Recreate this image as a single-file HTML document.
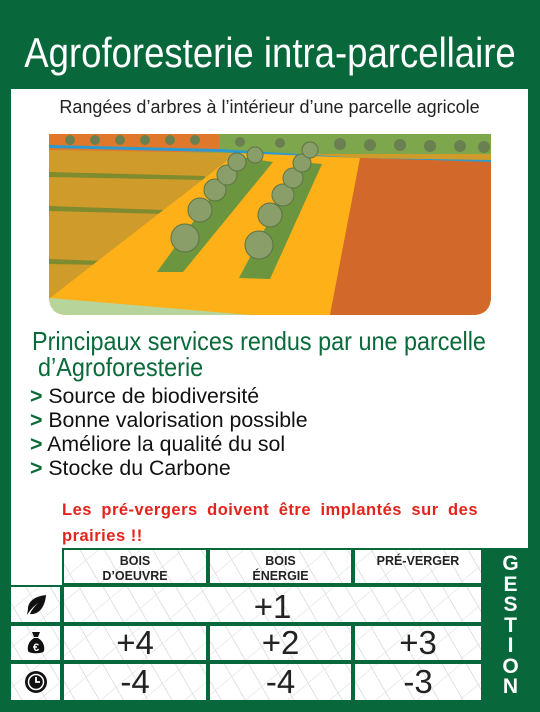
<!DOCTYPE html><html><head><meta charset="utf-8"><style>
*{margin:0;padding:0;box-sizing:border-box}
body{width:540px;height:712px;background:#09683b;position:relative;overflow:hidden;font-family:"Liberation Sans",sans-serif}
.a{position:absolute}
#title{left:270px;top:30px;white-space:nowrap;color:#fff;font-size:42px;line-height:46px;transform:translateX(-50%) scaleX(0.87);transform-origin:center}
#panel{left:11px;top:89px;width:517px;height:459px;background:#fff}
#sub{left:11px;top:97px;width:517px;text-align:center;font-size:18px;color:#222;white-space:nowrap}
.h2{color:#0b6a3a;font-size:26px;line-height:26px;white-space:nowrap;transform:scaleX(0.9);transform-origin:left}
.li{left:30px;font-size:21.3px;color:#111;line-height:24.5px;white-space:nowrap}
.li b{color:#0b6a3a}
#warn1{left:62px;top:497px;width:416px;color:#e3231c;font-weight:bold;font-size:16.5px;letter-spacing:0.5px;line-height:26px;text-align:justify;text-align-last:justify;white-space:nowrap}
#warn2{left:62px;top:523px;color:#e3231c;font-weight:bold;font-size:16.5px;letter-spacing:0.5px;line-height:26px}
.c{position:absolute;background:#fff;background-image:repeating-linear-gradient(60deg,transparent 0 9px,#e2e2e2 9px 10px,transparent 10px 21px),repeating-linear-gradient(-40deg,transparent 0 13px,#ececec 13px 14px,transparent 14px 27px);display:flex;align-items:center;justify-content:center;color:#222;font-size:33px}
.hd{font-size:12.5px;font-weight:bold;text-align:center;line-height:15px;align-items:flex-start;padding-top:4px}
#g{left:481px;top:554px;width:59px;text-align:center;color:#fff;font-weight:bold;font-size:21px;line-height:20.5px}
</style></head><body>
<div class="a" id="title">Agroforesterie intra-parcellaire</div>
<div class="a" id="panel"></div>
<div class="a" id="sub">Rangées d’arbres à l’intérieur d’une parcelle agricole</div>
<svg class="a" style="left:49px;top:134px" width="442" height="182" viewBox="49 134 442 182">
<defs><clipPath id="cp"><path d="M49 134H491V296Q491 315 472 315H68Q49 315 49 296Z"/></clipPath></defs>
<g clip-path="url(#cp)">
<rect x="49" y="134" width="442" height="181" fill="#cf9b2b"/>
<rect x="49" y="134" width="442" height="20" fill="#7ea64c"/>
<rect x="49" y="134" width="170" height="18" fill="#e0782c"/>
<path d="M49 145L220 149L360 158L491 160V162L360 161L220 152L49 148Z" fill="#2a9ad0"/>
<path d="M49 150L237 153L360 158L491 162V315H49Z" fill="#cf9b2b"/>
<path d="M49 172L205 176L205 180L49 177ZM49 206L165 210L165 214L49 211ZM49 259L105 261L105 265L49 264Z" fill="#7e8b2f"/>
<path d="M237 153L360 158L330 315L52 315L50 298Z" fill="#fdb017"/>
<path d="M49 298L50 298L250 315H49Z" fill="#b7d49b"/>
<path d="M360 158L491 162V315H330Z" fill="#d2682a"/>
<path d="M240 157L273 162L183 272L157 272Z" fill="#6b953f"/>
<path d="M300 162L322 164L270 279L239 278Z" fill="#6b953f"/>
<g fill="#8a9e6a" stroke="#5d7447" stroke-width="1">
<circle cx="185" cy="238" r="14"/><circle cx="200" cy="210" r="12"/><circle cx="215" cy="190" r="11"/><circle cx="227" cy="175" r="10"/><circle cx="237" cy="162" r="9"/><circle cx="255" cy="155" r="8"/>
<circle cx="259" cy="245" r="14"/><circle cx="270" cy="215" r="12"/><circle cx="283" cy="195" r="11"/><circle cx="293" cy="178" r="10"/><circle cx="302" cy="163" r="9"/><circle cx="310" cy="150" r="8"/>
</g>
<g fill="#6a8050"><circle cx="70" cy="140" r="5"/><circle cx="95" cy="140" r="5"/><circle cx="120" cy="140" r="5"/><circle cx="145" cy="140" r="5"/><circle cx="170" cy="140" r="5"/><circle cx="195" cy="140" r="5"/><circle cx="240" cy="142" r="5"/><circle cx="280" cy="143" r="5"/><circle cx="340" cy="144" r="6"/><circle cx="370" cy="145" r="6"/><circle cx="400" cy="145" r="6"/><circle cx="430" cy="146" r="6"/><circle cx="460" cy="146" r="6"/><circle cx="484" cy="147" r="6"/></g>
</g></svg>
<div class="a h2" style="left:32px;top:328px">Principaux services rendus par une parcelle</div>
<div class="a h2" style="left:38px;top:354px">d’Agroforesterie</div>
<div class="a li" style="top:384px"><b>&gt;</b> Source de biodiversité</div>
<div class="a li" style="top:408px"><b>&gt;</b> Bonne valorisation possible</div>
<div class="a li" style="top:432px"><b>&gt;</b> Améliore la qualité du sol</div>
<div class="a li" style="top:456px"><b>&gt;</b> Stocke du Carbone</div>
<div class="a" id="warn1">Les pré-vergers doivent être implantés sur des</div>
<div class="a" id="warn2">prairies !!</div>
<div class="a" style="left:11px;top:548px;width:51px;height:37px;background:#fff"></div>
<div class="c hd" style="left:64px;top:550px;width:142px;height:33px">BOIS<br>D’OEUVRE</div>
<div class="c hd" style="left:210px;top:550px;width:141px;height:33px">BOIS<br>ÉNERGIE</div>
<div class="c hd" style="left:355px;top:550px;width:126px;height:33px">PRÉ-VERGER</div>
<div class="c" style="left:11px;top:587px;width:49px;height:35px"><svg width="24" height="24" viewBox="0 0 24 24"><path d="M3 22C6 17 10 13 14 10C10 14 7 18 6 21C14 22 21 15 22 2C14 3 5 6 4 15C4 18 3 20 3 22Z" fill="#111"/></svg></div>
<div class="c" style="left:64px;top:587px;width:417px;height:35px;padding-top:4px">+1</div>
<div class="c" style="left:11px;top:626px;width:49px;height:34px"><svg width="20" height="24" viewBox="0 0 20 24"><path d="M6 1H14L12 6H8Z" fill="#111"/><path d="M8 7H12C17 10 19 15 18 20C17 23 3 23 2 20C1 15 3 10 8 7Z" fill="#111"/><text x="10" y="20" font-size="11" font-weight="bold" fill="#fff" text-anchor="middle" font-family="Liberation Sans">€</text></svg></div>
<div class="c" style="left:64px;top:626px;width:142px;height:34px">+4</div>
<div class="c" style="left:210px;top:626px;width:141px;height:34px">+2</div>
<div class="c" style="left:355px;top:626px;width:126px;height:34px">+3</div>
<div class="c" style="left:11px;top:664px;width:49px;height:36px"><svg width="24" height="24" viewBox="0 0 24 24"><circle cx="12" cy="12" r="11" fill="#111"/><circle cx="12" cy="12" r="7.5" fill="none" stroke="#fff" stroke-width="1.5"/><path d="M12 7V12H16" stroke="#fff" stroke-width="1.8" fill="none"/></svg></div>
<div class="c" style="left:64px;top:664px;width:142px;height:36px">-4</div>
<div class="c" style="left:210px;top:664px;width:141px;height:36px">-4</div>
<div class="c" style="left:355px;top:664px;width:126px;height:36px">-3</div>
<div class="a" id="g">G<br>E<br>S<br>T<br>I<br>O<br>N</div>
</body></html>
